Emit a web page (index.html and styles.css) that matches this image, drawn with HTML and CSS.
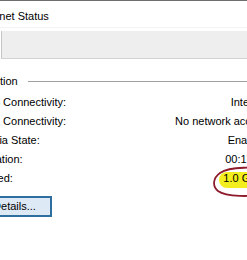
FILE: index.html
```html
<!DOCTYPE html>
<html>
<head>
<meta charset="utf-8">
<link rel="stylesheet" href="styles.css">
</head>
<body>
<div class="screen">
  <div class="topline"></div>
  <div class="title">Ethernet Status</div>
  <div class="tabs"></div>
  <section class="group">
    <div class="group-head"><span class="group-title">Connection</span><span class="group-line"></span></div>
    <dl class="rows">
      <div class="row"><dt>IPv4 Connectivity:</dt><dd>Internet</dd></div>
      <div class="row"><dt>IPv6 Connectivity:</dt><dd>No network access</dd></div>
      <div class="row"><dt>Media State:</dt><dd>Enabled</dd></div>
      <div class="row"><dt>Duration:</dt><dd>00:17:42</dd></div>
      <div class="row"><dt>Speed:</dt><dd><span class="speed"><svg class="mark" viewBox="0 0 60 32" width="60" height="32"><rect class="hl" x="7" y="5" width="60" height="16" rx="8"/><path class="ring" d="M60 3 C 44 0, 18 -1, 8 6 C 1 11, 0 19, 6 24 C 14 30, 38 30, 60 27"/></svg><span class="speed-text">1.0 Gbps</span></span></dd></div>
    </dl>
    <button class="details">Details...</button>
  </section>
</div>
</body>
</html>
```

FILE: styles.css
```css
html, body {
  margin: 0;
  background: #ffffff;
}
body {
  width: 247px;
  height: 260px;
  overflow: hidden;
  font-family: "Liberation Sans", Arial, sans-serif;
  font-size: 11px;
  color: #000000;
}
.screen {
  width: 318px;
  margin-left: -50px;
}
.topline {
  height: 1px;
  background: #6e6e6e;
}
.title {
  padding: 8px 0 0 23px;
  height: 18px;
  line-height: 14px;
  border-bottom: 1px solid #f3f3f3;
}
.tabs {
  margin: 3px 0 0 51px;
  height: 27px;
  background: #eeeeee;
  border-left: 1px solid #c6c6c6;
  border-bottom: 1px solid #d2d2d2;
}
.group {
  margin-top: 15px;
}
.group-head {
  display: flex;
  height: 14px;
  line-height: 14px;
  padding-left: 12px;
}
.group-line {
  flex: 1;
  height: 1px;
  background: #a0a0a0;
  margin: 7px 0 0 10px;
}
.rows {
  margin: 5px 0 0;
  padding-left: 28px;
}
.row {
  display: flex;
  justify-content: space-between;
  line-height: 19px;
  height: 19px;
}
.row dt, .row dd {
  margin: 0;
  white-space: nowrap;
}
.speed {
  position: relative;
  display: inline-block;
}
.mark {
  position: absolute;
  left: -11px;
  top: -2px;
  overflow: visible;
}
.hl {
  fill: #f3ee1e;
}
.ring {
  fill: none;
  stroke: #8e1b2b;
  stroke-width: 1.8;
}
.speed-text {
  position: relative;
}
.details {
  display: block;
  margin: 8px 0 0 27px;
  width: 75px;
  height: 21px;
  padding: 0;
  border: 2px solid #2f6f9f;
  background: #dde9f5;
  font: inherit;
  line-height: 17px;
  color: #000000;
}
```
